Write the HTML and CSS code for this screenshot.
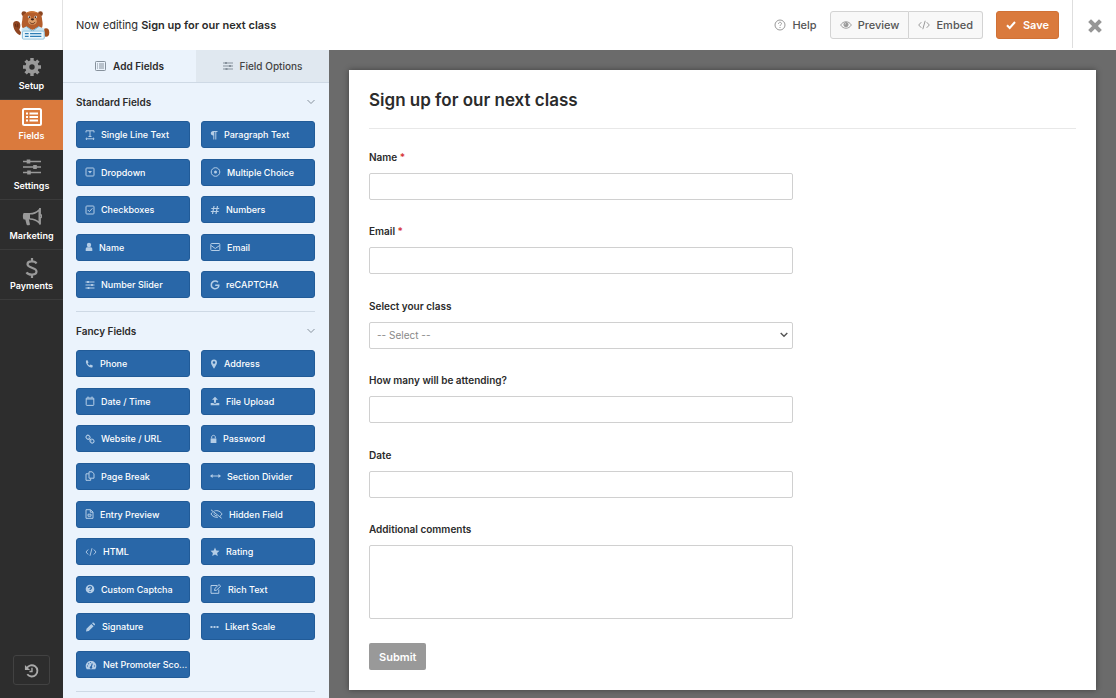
FILE: index.html
```
<!DOCTYPE html>
<html lang="en">
<head>
<meta charset="utf-8">
<title>Form Builder</title>
<link rel="stylesheet" href="styles.css">
</head>
<body>
<div class="app">
  <header class="topbar">
    <div class="brand">
      <svg width="38" height="32" viewBox="0 0 40 34" aria-label="Logo">
        <circle cx="12.500" cy="5" r="2.600" fill="#8a4420"/><circle cx="30" cy="5" r="2.600" fill="#8a4420"/>
        <ellipse cx="36" cy="25" rx="3.400" ry="4.600" fill="#a3501f"/>
        <path d="M1 16c0-4.500 7-4.500 7.500 0 .5 2.500 0 4-1 6l2 3-1 3C4 26 1 21 1 16z" fill="#8f4521"/>
        <path d="M3.500 16l.5 3M6 15.500v4" stroke="#5e2a12" stroke-width="1" fill="none"/>
        <path d="M11 9c0-8 20-8 20.500 0 .3 4 1.500 6 .5 10-1 4-20 4-21.500 0-1-4 .5-6 .5-10z" fill="#b45e2c"/>
        <path d="M14 5c3-4 11-4 14 0-4-1.500-10-1.500-14 0z" fill="#cc7538"/>
        <ellipse cx="21.500" cy="13" rx="4.600" ry="3.600" fill="#e0a06a"/>
        <circle cx="18" cy="8.500" r="1.400" fill="#fff"/><circle cx="25" cy="8.500" r="1.400" fill="#fff"/>
        <circle cx="18.200" cy="8.600" r=".9" fill="#2b1a12"/><circle cx="24.800" cy="8.600" r=".9" fill="#2b1a12"/>
        <ellipse cx="21.500" cy="11" rx="1.800" ry="1.200" fill="#402016"/>
        <path d="M18.500 14c2 2 4.500 2 6-.3" stroke="#5a2b18" fill="none"/>
        <path d="M10 21l5-2.500 6.500 4 7-4L34 21l1 10H10z" fill="#c9e5f3"/>
        <path d="M15 18.500l6.500 5 7-5" stroke="#78aecb" fill="none"/>
        <rect x="11" y="23.500" width="23" height="8.500" rx="1" fill="#eaf6fc" stroke="#79b5d5" stroke-width=".8"/>
        <path d="M13.500 26.200h4M19 26.200h12M13.500 29.200h4M19 29.200h12" stroke="#2f7fb6" stroke-width="1.300"/>
      </svg>
    </div>
    <h1 class="editing">Now editing <strong>Sign up for our next class</strong></h1>
    <div class="actions">
      <button class="help" type="button">
        <svg width="12" height="12" viewBox="0 0 12 12" class="line"><circle cx="6" cy="6" r="5"/><path d="M4.500 4.800c0-2 3-2 3-.2 0 1.200-1.500 1.100-1.500 2.300M6 8v1"/></svg>
        Help</button>
      <div class="group">
        <button type="button"><svg width="12" height="10" viewBox="0 0 13 10" class="line"><path d="M.7 5C3.500.3 9.500.3 12.300 5 9.500 9.700 3.500 9.700.7 5z"/><circle cx="6.500" cy="4.600" r="2.300" fill="currentColor"/><path d="M5.500 4.400c0-.7.4-1 1-1" stroke="#fff" stroke-width=".7"/></svg>Preview</button>
        <button type="button"><svg width="12" height="10" viewBox="0 0 12 10" class="line"><path d="M3.300 2.200L.7 5l2.600 2.800M8.700 2.200L11.300 5 8.700 7.800M7.200.8L4.800 9.200"/></svg>Embed</button>
      </div>
      <button class="save" type="button"><svg width="10" height="10" viewBox="0 0 10 10"><path d="M1 5.200L3.700 8 9 2" fill="none" stroke="#fff" stroke-width="2"/></svg>Save</button>
    </div>
    <button class="close" type="button" aria-label="Close"><svg width="14" height="14" viewBox="0 0 14 14"><path d="M3 3l8 8M11 3l-8 8" stroke="#969696" stroke-width="4" stroke-linecap="square"/></svg></button>
  </header>

  <div class="workspace">
    <nav class="rail">
      <a href="#setup"><svg width="18" height="18" viewBox="0 0 18 18"><circle cx="9" cy="9" r="4.700" fill="none" stroke="currentColor" stroke-width="4"/><path d="M9 0v4M9 14v4M0 9h4M14 9h4M2.600 2.600l3 3M12.400 12.400l3 3M15.400 2.600l-3 3M5.600 12.400l-3 3" stroke="currentColor" stroke-width="3.400"/></svg>Setup</a>
      <a href="#fields" class="active"><svg width="20" height="18" viewBox="0 0 20 18"><rect x="1" y="1" width="18" height="16" rx="1.500" fill="none" stroke="currentColor" stroke-width="2"/><path d="M4 5.500h2M4 9h2M4 12.500h2M7.500 5.500H16M7.500 9H16M7.500 12.500H16" stroke="currentColor" stroke-width="2"/></svg>Fields</a>
      <a href="#settings"><svg width="18" height="18" viewBox="0 0 18 18"><path d="M0 3.500h18M0 9h18M0 14.500h18" stroke="currentColor" stroke-width="1.600"/><path d="M5.500 1.500v4M12 7v4M6 12.500v4" stroke="currentColor" stroke-width="3.600"/></svg>Settings</a>
      <a href="#marketing"><svg width="20" height="18" viewBox="0 0 20 18"><path d="M2 5h6v6.500H2C.5 11.500.5 5 2 5z" fill="currentColor"/><path d="M3.200 11h3.600L8 16.500c-1 1.300-3 1-3.400 0z" fill="currentColor"/><path d="M8 5.800c4 0 7-1.800 9.300-4v13C15 12.600 12 11 8 11" fill="none" stroke="currentColor" stroke-width="1.600"/><path d="M18 0v6.500c1.800.3 1.800 3.200 0 3.500v6.500" fill="none" stroke="currentColor" stroke-width="1.800"/></svg>Marketing</a>
      <a href="#payments"><svg width="14" height="20" viewBox="0 0 14 20"><path d="M11.500 5.500C10 2.800 2.500 2.500 2.500 6.300c0 4 9 2.900 9 7.200 0 4-8 4-10 .8M7 0v3M7 17v3" fill="none" stroke="currentColor" stroke-width="2.200"/></svg>Payments</a>
      <button class="history" type="button" aria-label="Revisions"><svg width="15" height="15" viewBox="0 0 16 16"><path d="M3 5.500A6 6 0 1 1 3.500 12" fill="none" stroke="currentColor" stroke-width="2"/><path d="M1 2v5.500h5.500z" fill="currentColor"/><path d="M8.500 5v4H5.800" fill="none" stroke="currentColor" stroke-width="1.500"/></svg></button>
    </nav>

    <aside class="panel">
      <div class="tabs">
        <button type="button" class="tab current"><svg width="11" height="10" viewBox="0 0 11 10" class="line"><rect x=".5" y=".5" width="10" height="9" rx=".8"/><path d="M2 3h1M4 3h5M2 5h1M4 5h5M2 7h1M4 7h5"/></svg>Add Fields</button>
        <button type="button" class="tab"><svg width="10" height="10" viewBox="0 0 10 10" class="line"><path d="M0 2h10M0 5h10M0 8h10"/><path d="M3 1v2M7 4v2M3.500 7v2" stroke-width="2"/></svg>Field Options</button>
      </div>

      <section class="fieldset">
        <h2>Standard Fields<svg width="8" height="6" viewBox="0 0 8 6" class="line"><path d="M.5 1L4 4.500 7.500 1"/></svg></h2>
        <div class="grid standard">
          <button type="button"><svg width="10" height="10" viewBox="0 0 10 10" class="line"><path d="M1 2.500V.8h8v1.700M5 1v5.500M3.500 6.500h3M1 8.800h8M2 7.700L.8 8.800 2 9.800M8 7.700l1.200 1.100L8 9.800"/></svg>Single Line Text</button>
          <button type="button"><svg width="8" height="10" viewBox="0 0 8 10"><path d="M7.500 1H3.300C0 1 0 5.500 3.300 5.500V9.500h1V2h1v7.500h1V2h1.200z" fill="currentColor"/></svg>Paragraph Text</button>
          <button type="button"><svg width="10" height="10" viewBox="0 0 10 10" class="line"><rect x="1" y="1" width="8" height="8" rx=".8"/><path d="M3 4h4L5 6.500z" fill="currentColor" stroke="none"/></svg>Dropdown</button>
          <button type="button"><svg width="11" height="10" viewBox="0 0 11 10" class="line"><circle cx="5.500" cy="5" r="4.300"/><circle cx="5.500" cy="5" r="1.500" fill="currentColor" stroke="none"/></svg>Multiple Choice</button>
          <button type="button"><svg width="10" height="10" viewBox="0 0 10 10" class="line"><rect x="1" y="1" width="8" height="8" rx=".8"/><path d="M2.800 5l1.600 1.600 3-3.300"/></svg>Checkboxes</button>
          <button type="button"><svg width="10" height="10" viewBox="0 0 10 10" class="line"><path d="M4 1L2.500 9M7.500 1L6 9M1.300 3.500h7.900M.8 6.500h7.900" stroke-width="1.200"/></svg>Numbers</button>
          <button type="button"><svg width="8" height="10" viewBox="0 0 8 10"><circle cx="4" cy="3" r="2.200" fill="currentColor"/><path d="M.7 9V7c0-2 1.500-2 3.300-1.700C5.800 5 7.300 5 7.300 7v2z" fill="currentColor"/></svg>Name</button>
          <button type="button"><svg width="11" height="10" viewBox="0 0 11 10" class="line"><rect x=".8" y="1.500" width="9" height="7" rx=".8"/><path d="M1 3.500l4.300 3 4.300-3"/></svg>Email</button>
          <button type="button"><svg width="10" height="10" viewBox="0 0 10 10" class="line"><path d="M.5 2h9M.5 5h9M.5 8h9"/><path d="M3 1v2M7 4v2M3.500 7v2" stroke-width="1.800"/></svg>Number Slider</button>
          <button type="button"><svg width="10" height="10" viewBox="0 0 10 10" class="line"><path d="M8 2.200C5.500-.3 1.300 1.300 1.300 5S5.800 9.800 8 7.500c.6-.7.9-1.500.8-2.200H5.200" stroke-width="1.500"/></svg>reCAPTCHA</button>
        </div>
      </section>

      <section class="fieldset">
        <h2>Fancy Fields<svg width="8" height="6" viewBox="0 0 8 6" class="line"><path d="M.5 1L4 4.500 7.500 1"/></svg></h2>
        <div class="grid fancy">
          <button type="button"><svg width="9" height="10" viewBox="0 0 9 10"><path d="M1 1.500l1.600-.3L3.500 3.500l-.9.9c.5 1 1.200 1.700 2 2.100l1-.9 2.200 1-.3 1.600C4 9.500.3 5 1 1.500z" fill="currentColor"/></svg>Phone</button>
          <button type="button"><svg width="8" height="10" viewBox="0 0 8 10"><path d="M4 .5a3 3 0 0 1 3 3C7 5.500 5.500 7 4 9.800 2.500 7 1 5.500 1 3.500a3 3 0 0 1 3-3zm0 1.700a1.300 1.300 0 1 0 0 2.600 1.300 1.300 0 0 0 0-2.600z" fill="currentColor"/></svg>Address</button>
          <button type="button"><svg width="10" height="10" viewBox="0 0 10 10" class="line"><rect x="1.200" y="2" width="7.600" height="7.400" rx=".6"/><path d="M1 3h8M3 .5V2M7 .5V2"/></svg>Date / Time</button>
          <button type="button"><svg width="10" height="10" viewBox="0 0 10 10"><path d="M5 .8l3 3H6v3H4v-3H2zM.7 7h2.500c.5 1 3 1 3.600 0h2.500v2.300H.7z" fill="currentColor"/></svg>File Upload</button>
          <button type="button"><svg width="10" height="10" viewBox="0 0 10 10" class="line"><rect x="1.300" y="1.300" width="3.500" height="4" rx="1.500" transform="rotate(-45 3 3.300)"/><rect x="5.200" y="5" width="3.500" height="4" rx="1.500" transform="rotate(-45 7 7)"/><path d="M3.500 4l3 2.800"/></svg>Website / URL</button>
          <button type="button"><svg width="7" height="10" viewBox="0 0 7 10"><path d="M.6 4.500h5.800V9H.6z" fill="currentColor"/><path d="M1.700 4.500V3c0-2.200 3.600-2.200 3.600 0v1.500" fill="none" stroke="currentColor"/></svg>Password</button>
          <button type="button"><svg width="10" height="10" viewBox="0 0 10 10" class="line"><path d="M4 .8h3L9 2.700v4.500H4zM3.800 2.800H1v6.500h4.700V7.500"/></svg>Page Break</button>
          <button type="button"><svg width="11" height="10" viewBox="0 0 11 10"><path d="M0 5l2.600-2v1.400h5.800V3L11 5 8.400 7V5.600H2.600V7z" fill="currentColor"/></svg>Section Divider</button>
          <button type="button"><svg width="9" height="10" viewBox="0 0 9 10" class="line"><path d="M1 .7h4.500L8 3v6.300H1zM5.300 1v2.200H8M3 5.200h3v2H3z"/></svg>Entry Preview</button>
          <button type="button"><svg width="13" height="10" viewBox="0 0 13 10" class="line"><path d="M1 .8l10.700 8.500M4.300 2C8 .8 10.800 2.800 12 5c-.5 1-1.200 1.700-2 2.300M8 8.200C4.800 8.700 2.300 7.200 1 5c.4-.8 1-1.500 1.700-2M4 4.500c.2 1.700 1.500 2.500 3 2.300"/></svg>Hidden Field</button>
          <button type="button"><svg width="12" height="10" viewBox="0 0 12 10" class="line"><path d="M3.200 2.500L1 5l2.200 2.500M8.800 2.500L11 5 8.800 7.500M7 1.200L5 8.800" stroke-width=".9"/></svg>HTML</button>
          <button type="button"><svg width="10" height="10" viewBox="0 0 10 10"><path d="M5 .5l1.300 3 3.200.3-2.400 2.100.7 3.200L5 7.400 2.200 9.100l.7-3.200L.5 3.800l3.200-.3z" fill="currentColor"/></svg>Rating</button>
          <button type="button"><svg width="10" height="10" viewBox="0 0 10 10"><circle cx="5" cy="5" r="4.300" fill="currentColor"/><path d="M3.500 4c0-2 3-1.800 3-.2C6.500 5 5 4.900 5 6M5 7v1" fill="none" stroke="#2967a8" stroke-width="1.200"/></svg>Custom Captcha</button>
          <button type="button"><svg width="12" height="10" viewBox="0 0 12 10" class="line"><path d="M7 1.500H1v7.800h7.800V5.500M4.500 6.500l.4-2L9 .6l1.700 1.600-4.200 4z"/></svg>Rich Text</button>
          <button type="button"><svg width="11" height="10" viewBox="0 0 11 10"><path d="M1 9.500l.5-2.800L6.300 2l2.300 2.300-4.800 4.800zM7 1.300l.8-.8c.7-.5 2.800 1.500 2.200 2.300l-.7.8z" fill="currentColor"/></svg>Signature</button>
          <button type="button"><svg width="9" height="10" viewBox="0 0 9 10"><path d="M.5 4h2v2h-2zM3.500 4h2v2h-2zM6.500 4h2v2h-2z" fill="currentColor"/></svg>Likert Scale</button>
          <button type="button"><svg width="12" height="10" viewBox="0 0 12 10"><path d="M1.800 9.300C-1 5 2 1 6 1s7 4 4.200 8.300z" fill="currentColor"/><path d="M6 7.700L7.300 3.500M2 6h1M9 6h1M3.300 3.500l.7.6M5.500 2.200v.8" stroke="#2967a8" stroke-width="1.100"/><circle cx="6" cy="7.500" r="1.200" fill="#2967a8"/></svg>Net Promoter Sco...</button>
        </div>
      </section>
    </aside>

    <main class="canvas">
      <form class="card">
        <h2 class="title">Sign up for our next class</h2>
        <div class="fields">
          <div class="field"><label for="name">Name <span class="req">*</span></label><input id="name" type="text"></div>
          <div class="field"><label for="email">Email <span class="req">*</span></label><input id="email" type="email"></div>
          <div class="field"><label for="class">Select your class</label>
            <div class="select"><select id="class"><option>-- Select --</option></select><svg width="8" height="6" viewBox="0 0 8 6"><path d="M.7 1L4 4.300 7.300 1" fill="none" stroke="#555" stroke-width="1.400"/></svg></div></div>
          <div class="field"><label for="count">How many will be attending?</label><input id="count" type="text"></div>
          <div class="field"><label for="date">Date</label><input id="date" type="text"></div>
          <div class="field"><label for="comments">Additional comments</label><textarea id="comments"></textarea></div>
        </div>
        <button class="submit" type="button">Submit</button>
      </form>
    </main>
  </div>
</div>
</body>
</html>
```
FILE: styles.css
```
* { box-sizing: border-box; }
body {
  margin: 0;
  font-family: Inter, "Liberation Sans", sans-serif;
  font-size: 10px;
  color: #2b2b2b;
}
button, input, select, textarea { font: inherit; color: inherit; margin: 0; }
button { cursor: pointer; }
h1, h2 { margin: 0; }
svg { flex: none; display: block; }
.line { fill: none; stroke: currentColor; stroke-width: 1; }
.app { display: flex; flex-direction: column; height: 100vh; overflow: hidden; }

/* Top bar */
.topbar { display: flex; align-items: center; flex: none; height: 50px; background: #fff; }
.brand {
  display: flex; align-items: center; justify-content: center;
  width: 63px; height: 50px; border-right: 1px solid #e2e2e2;
}
.editing { margin-left: 13px; font-size: 11px; font-weight: 400; }
.editing strong { font-weight: 600; }
.actions { display: flex; align-items: center; margin-left: auto; }
.actions button {
  display: flex; align-items: center; gap: 6px;
  height: 28px; padding: 0 9px;
  font-size: 11px; font-weight: 500; color: #555;
  background: #f8f8f8; border: 1px solid #d3d3d3;
}
.actions svg { color: #999; }
.actions .help { background: none; border: 0; padding: 0; margin-right: 13px; }
.group { display: flex; }
.group button:first-child { border-radius: 3px 0 0 3px; }
.group button:last-child { border-radius: 0 3px 3px 0; border-left: 0; }
.actions .save {
  margin: 0 13px; padding: 0 9px; gap: 7px;
  color: #fff; background: #da7a3d; border-color: #d07136; border-radius: 3px; font-weight: 600;
}
.close {
  display: flex; align-items: center; justify-content: center;
  width: 44px; height: 48px; align-self: flex-start;
  background: none; border: 0; border-left: 1px solid #dedede; padding: 3px 0 0;
}

/* Navigation rail */
.workspace { display: flex; flex: 1; min-height: 0; }
.rail { display: flex; flex-direction: column; flex: none; width: 63px; background: #2d2d2d; }
.rail a {
  display: flex; flex-direction: column; align-items: center; justify-content: space-between;
  height: 50px; padding: 8px 0 6px;
  font-size: 9px; line-height: 14px; font-weight: 600; color: #fff; text-decoration: none;
  border-bottom: 1px solid #3b3b3b;
}
.rail a svg { color: #999; }
.rail .active { background: #da7a3d; border-color: #da7a3d; }
.rail .active svg { color: #fff; }
.history {
  display: flex; align-items: center; justify-content: center;
  width: 37px; height: 30px; margin: auto auto 13px;
  color: #aaa; background: #2d2d2d; border: 1px solid #424242; border-radius: 3px;
}

/* Field palette */
.panel { flex: none; width: 266px; overflow: hidden; background: #ebf3fc; }
.tabs { display: grid; grid-template-columns: 1fr 1fr; }
.tab {
  display: flex; align-items: center; justify-content: center; gap: 7px;
  height: 33px; padding: 0; font-weight: 500; color: #444;
  background: #e0e8f0; border: 0; border-bottom: 1px solid #ced9e5;
}
.tab.current { background: #ebf3fc; color: #2b2b2b; font-weight: 600; }
.tab svg { color: #86919c; }
.fieldset { margin: 0 14px 0 13px; padding-bottom: 13px; border-bottom: 1px solid #ced9e5; }
.fieldset h2 {
  display: flex; align-items: center; justify-content: space-between;
  height: 38px; font-size: 10px; font-weight: 600;
}
.fieldset h2 svg { color: #86919c; }
.grid { display: grid; grid-template-columns: 1fr 1fr; column-gap: 11px; align-content: space-between; }
.standard { min-height: 177px; }
.fancy { min-height: 328px; }
.grid button {
  display: flex; align-items: center; gap: 6px;
  height: 27px; padding: 0 0 0 8px;
  font-size: 9px; font-weight: 500; color: #fff; white-space: nowrap;
  background: #2967a8; border: 1px solid #215b98; border-radius: 3px;
}
.grid svg { color: #b4cde6; }

/* Form preview */
.canvas { flex: 1; padding: 20px 20px 8px; background: #6b6b6b; overflow: hidden; }
.card { padding: 0 20px 20px; background: #fff; box-shadow: 0 0 6px #00000066; }
.title {
  height: 59px; border-bottom: 1px solid #e8e8e8;
  font-size: 17px; line-height: 61px; font-weight: 600;
}
.fields {
  display: flex; flex-direction: column; justify-content: space-between;
  width: 60%; min-height: 470px; margin: 20px 0 24px;
}
.field { display: flex; flex-direction: column; gap: 8px; }
.field label { font-weight: 600; line-height: 16px; }
.req { color: #d63638; }
.field input, .field textarea, .field select {
  width: 100%; height: 27px; padding: 0 7px; display: block;
  background: #fff; border: 1px solid #d0d0d0; border-radius: 2px; resize: none;
}
.field textarea { height: 74px; }
.select { display: grid; align-items: center; }
.select > * { grid-area: 1 / 1; }
.field select { appearance: none; color: #888; }
.select svg { justify-self: end; margin-right: 5px; pointer-events: none; }
.submit {
  height: 27px; padding: 0 10px; display: block;
  color: #fff; background: #999; border: 0; border-radius: 2px; font-size: 11px; font-weight: 600;
}
```
